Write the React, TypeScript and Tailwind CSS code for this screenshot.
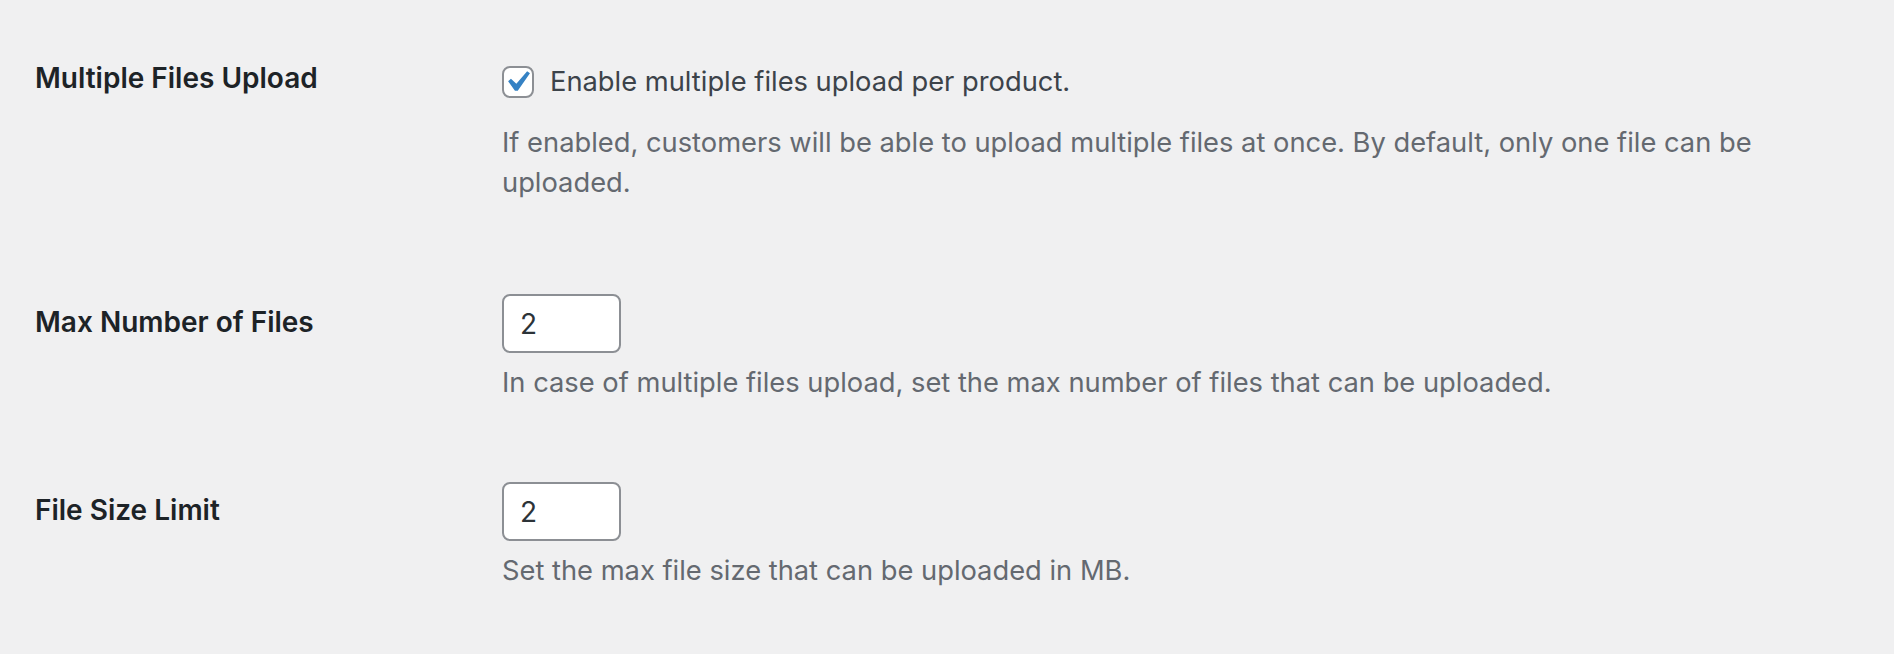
import React from 'react';

const rows = [
  {
    label: 'Max Number of Files',
    value: '2',
    help: 'In case of multiple files upload, set the max number of files that can be uploaded.',
    gap: 'mt-[91px]',
  },
  {
    label: 'File Size Limit',
    value: '2',
    help: 'Set the max file size that can be uploaded in MB.',
    gap: 'mt-[79px]',
  },
];

function CheckMark() {
  return (
    <svg viewBox="0 0 20 20" className="absolute -left-[8px] -top-[7px] w-[42px] h-[42px]">
      <path d="M14.83 4.89l1.34.94-5.81 8.38H9.02L5.78 9.67l1.34-1.25 2.57 2.4z" fill="#3582c4" />
    </svg>
  );
}

export default function App() {
  return (
    <div className="min-h-[654px] w-full bg-[#f0f0f1] pt-[60px] pl-[35px] font-['Inter',sans-serif] antialiased">
      {/* multiple upload */}
      <div className="flex">
        <div className="w-[467px] shrink-0 text-[28px] leading-[36px] font-semibold text-[#1d2327]">
          Multiple Files Upload
        </div>
        <div className="pt-[4px]">
          <label className="flex items-center gap-[16px]">
            <span className="relative block w-[32px] h-[32px] rounded-[8px] border-2 border-[#8c8f94] bg-white">
              <CheckMark />
            </span>
            <span className="text-[27.3px] leading-[36px] text-[#3c434a]">Enable multiple files upload per product.</span>
          </label>
          <p className="mt-[23px] w-[1300px] text-[27.3px] leading-[40px] text-[#646970]">
            If enabled, customers will be able to upload multiple files at once. By default, only one file can be uploaded.
          </p>
        </div>
      </div>

      {rows.map((row) => (
        <div key={row.label} className={`flex ${row.gap}`}>
          <div className="w-[467px] shrink-0 pt-[10px] text-[28px] leading-[36px] font-semibold text-[#1d2327]">
            {row.label}
          </div>
          <div>
            <input
              type="number"
              defaultValue={row.value}
              className="block w-[119px] h-[59px] rounded-[8px] border-2 border-[#8c8f94] bg-white px-[16px] text-[28px] text-[#2c3338] outline-none [appearance:textfield] [&::-webkit-inner-spin-button]:appearance-none"
            />
            <p className="mt-[10px] text-[27.3px] leading-[40px] text-[#646970]">{row.help}</p>
          </div>
        </div>
      ))}
    </div>
  );
}
